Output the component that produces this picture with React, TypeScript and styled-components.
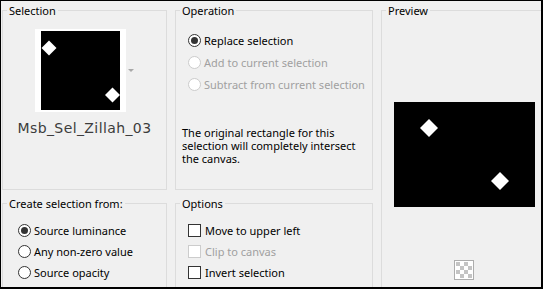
import React from 'react';
import styled, { createGlobalStyle } from 'styled-components';

const GlobalStyle = createGlobalStyle`
   html, body {
      margin: 0;
      padding: 0;
      background: #f0f0f0;
   }
   body {
      font-family: "Noto Sans", "Open Sans", sans-serif;
      font-size: 11px;
      color: #000;
   }
`;

type ChoiceType = {
   label: string;
   checked?: boolean;
   disabled?: boolean;
};

const operations: ChoiceType[] = [
   { label: 'Replace selection', checked: true },
   { label: 'Add to current selection', disabled: true },
   { label: 'Subtract from current selection', disabled: true },
];

const sources: ChoiceType[] = [
   { label: 'Source luminance', checked: true },
   { label: 'Any non-zero value' },
   { label: 'Source opacity' },
];

const options: ChoiceType[] = [
   { label: 'Move to upper left' },
   { label: 'Clip to canvas', disabled: true },
   { label: 'Invert selection' },
];

const Diamond = (props: { cx: number; cy: number; r: number }) => {
   const { cx, cy, r } = props;
   return (
      <polygon
         points={`${cx},${cy - r} ${cx + r},${cy} ${cx},${cy + r} ${cx - r},${cy}`}
         fill="#fff"
      />
   );
};

const CheckerIcon = () => {
   const cells = [];
   for (let row = 0; row < 4; row++) {
      for (let col = 0; col < 4; col++) {
         if ((row + col) % 2 === 0) {
            cells.push(<rect key={`${row}-${col}`} x={2 + col * 4} y={2 + row * 4} width={4} height={4} fill="#c4c4c4" />);
         }
      }
   }
   return (
      <svg width="20" height="20" viewBox="0 0 20 20">
         <rect x="0.5" y="0.5" width="19" height="19" fill="#fff" stroke="#adadad" />
         {cells}
      </svg>
   );
};

export default function App() {
   return (
      <>
         <GlobalStyle />
         <Dialog>
            <Layout>
               <Group>
                  <Legend>Selection</Legend>
                  <SelectionBody>
                     <ThumbRow>
                        <Thumb>
                           <svg width="79" height="79" viewBox="0 0 79 79">
                              <rect width="79" height="79" fill="#000" />
                              <Diamond cx={8} cy={17} r={7.5} />
                              <Diamond cx={71.5} cy={64} r={7.5} />
                           </svg>
                        </Thumb>
                        <DropArrow />
                     </ThumbRow>
                     <PresetName>Msb_Sel_Zillah_03</PresetName>
                  </SelectionBody>
               </Group>

               <Group>
                  <Legend>Operation</Legend>
                  <ChoiceList $top={12} $left={12} $row={22}>
                     {operations.map((item) => (
                        <Choice key={item.label} $disabled={item.disabled}>
                           <Radio $checked={item.checked} $disabled={item.disabled} />
                           {item.label}
                        </Choice>
                     ))}
                  </ChoiceList>
                  <Note>
                     The original rectangle for this
                     <br />
                     selection will completely intersect
                     <br />
                     the canvas.
                  </Note>
               </Group>

               <PreviewGroup>
                  <Legend>Preview</Legend>
                  <PreviewBody>
                     <PreviewImage>
                        <svg width="141" height="105" viewBox="0 0 141 105">
                           <rect width="141" height="105" fill="#000" />
                           <Diamond cx={35} cy={26} r={9} />
                           <Diamond cx={106} cy={79} r={9} />
                        </svg>
                     </PreviewImage>
                     <CheckerButton>
                        <CheckerIcon />
                     </CheckerButton>
                  </PreviewBody>
               </PreviewGroup>

               <Group>
                  <Legend>Create selection from:</Legend>
                  <ChoiceList $top={10} $left={15} $row={21}>
                     {sources.map((item) => (
                        <Choice key={item.label} $disabled={item.disabled}>
                           <Radio $checked={item.checked} $disabled={item.disabled} />
                           {item.label}
                        </Choice>
                     ))}
                  </ChoiceList>
               </Group>

               <Group>
                  <Legend>Options</Legend>
                  <ChoiceList $top={10} $left={12} $row={21}>
                     {options.map((item) => (
                        <Choice key={item.label} $disabled={item.disabled} $gap={4}>
                           <Checkbox $disabled={item.disabled} />
                           {item.label}
                        </Choice>
                     ))}
                  </ChoiceList>
               </Group>
            </Layout>
         </Dialog>
      </>
   );
}

const Dialog = styled.div`
   width: 543px;
   height: 289px;
   box-sizing: border-box;
   border-style: solid;
   border-color: #000;
   border-width: 1px 2px 2px 1px;
   background: #f0f0f0;
   overflow: hidden;
`;
const Layout = styled.div`
   display: grid;
   grid-template-columns: 165px 198px 166px;
   grid-template-rows: 186px 120px;
   column-gap: 8px;
   row-gap: 7px;
   padding: 3px 0 0 1px;
`;
const Group = styled.fieldset`
   margin: 0;
   padding: 0;
   min-width: 0;
   border: 1px solid #dcdcdc;
   display: flex;
   flex-direction: column;
`;
const PreviewGroup = styled(Group)`
   grid-column: 3;
   grid-row: 1 / span 2;
`;
const Legend = styled.legend`
   margin-left: 4px;
   padding: 0 2px;
   font-size: 11px;
   line-height: 13px;
   color: #000;
`;
const SelectionBody = styled.div`
   display: flex;
   flex-direction: column;
   align-items: center;
`;
const ThumbRow = styled.div`
   margin-top: 12px;
   display: flex;
   align-items: center;
   gap: 2px;
`;
const Thumb = styled.div`
   background: #fff;
   padding: 2px 6px;
   line-height: 0;
`;
const DropArrow = styled.span`
   width: 0;
   height: 0;
   border-left: 3px solid transparent;
   border-right: 3px solid transparent;
   border-top: 3px solid #a8a8a8;
`;
const PresetName = styled.div`
   margin-top: 7px;
   font-family: "DejaVu Sans", sans-serif;
   font-size: 14px;
   line-height: 18px;
   letter-spacing: 0.4px;
   color: #3c3c3c;
`;
const ChoiceList = styled.div<{ $top: number; $left: number; $row: number }>`
   margin-top: ${(p) => p.$top}px;
   padding-left: ${(p) => p.$left}px;
   display: grid;
   grid-auto-rows: ${(p) => p.$row}px;
`;
const Choice = styled.div<{ $disabled?: boolean; $gap?: number }>`
   display: flex;
   align-items: center;
   gap: ${(p) => p.$gap ?? 3}px;
   white-space: nowrap;
   color: ${(p) => (p.$disabled ? '#a0a0a0' : '#000')};
`;
const Radio = styled.span<{ $checked?: boolean; $disabled?: boolean }>`
   width: 13px;
   height: 13px;
   box-sizing: border-box;
   border-radius: 50%;
   border: 1px solid ${(p) => (p.$disabled ? '#cccccc' : '#333')};
   background: #fff;
   display: flex;
   align-items: center;
   justify-content: center;
   flex-shrink: 0;

   &::after {
      content: '';
      width: 7px;
      height: 7px;
      border-radius: 50%;
      background: #333;
      display: ${(p) => (p.$checked ? 'block' : 'none')};
   }
`;
const Checkbox = styled.span<{ $disabled?: boolean }>`
   width: 13px;
   height: 13px;
   box-sizing: border-box;
   border: 1px solid ${(p) => (p.$disabled ? '#cccccc' : '#333')};
   background: #fff;
   flex-shrink: 0;
`;
const Note = styled.p`
   margin: 31px 0 0 6px;
   line-height: 13px;
`;
const PreviewBody = styled.div`
   display: flex;
   flex-direction: column;
   align-items: center;
`;
const PreviewImage = styled.div`
   margin-top: 85px;
   line-height: 0;
`;
const CheckerButton = styled.div`
   margin-top: 53px;
   line-height: 0;
`;
